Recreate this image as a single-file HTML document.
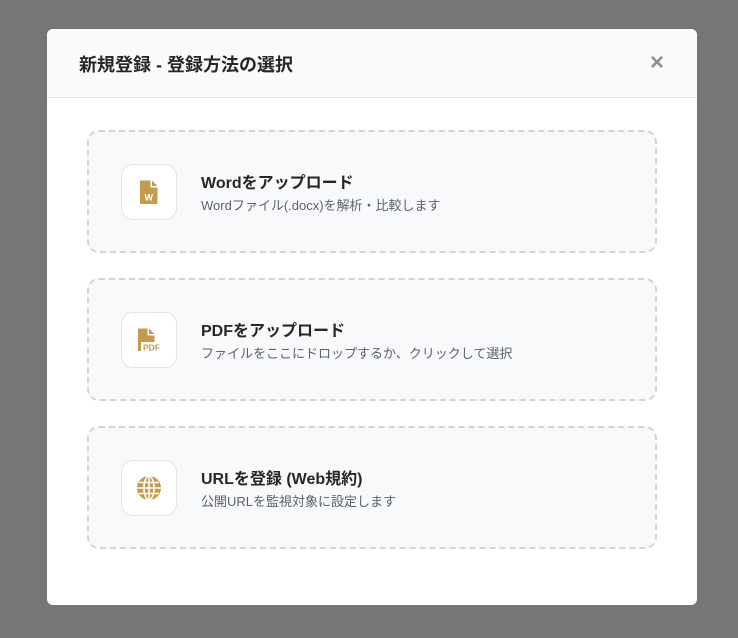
<!DOCTYPE html>
<html><head><meta charset="utf-8"><style>
*{box-sizing:border-box;margin:0;padding:0}
body{width:738px;height:638px;background:#767676;font-family:"Liberation Sans","Noto Sans CJK JP",sans-serif;position:relative;overflow:hidden}
.modal{position:absolute;left:47px;top:29px;width:650px;height:576px;background:#fff;border-radius:6px;overflow:hidden}
.hd{height:69px;background:#fafafa;border-bottom:1px solid #e5e7eb;position:relative}
.hd h1{position:absolute;left:32px;top:22px;font-size:18px;font-weight:bold;color:#27272a}
.x{position:absolute;left:603px;top:20px;font-size:24px;color:#8b8f97;font-weight:bold}
.card{position:absolute;left:40px;width:570px;height:123px;border:2px dashed #d1d5db;border-radius:12px;background:#f8f9fb}
.ic{position:absolute;left:32px;top:32px;width:56px;height:56px;background:#fff;border:1px solid #e3e5e9;border-radius:12px;display:flex;align-items:center;justify-content:center}
.t{position:absolute;left:112px;top:37px;font-size:16px;font-weight:bold;color:#27272a}
.s{position:absolute;left:112px;top:63px;font-size:13px;color:#5b606a}
</style></head><body>
<div class="modal">
<div class="hd"><h1>新規登録 - 登録方法の選択</h1><div class="x">×</div></div>
<div class="card" style="top:101px"><div class="ic"><svg width="20" height="26" viewBox="0 0 20 26"><path d="M2 1.5h9.5v7h7V24a1 1 0 0 1-1 1H2a1 1 0 0 1-1-1V2.5a1 1 0 0 1 1-1z" fill="#c49a4b"/><path d="M13 1.5l5.5 5.5H13z" fill="#c49a4b"/><text x="9.8" y="21.5" font-size="9" font-weight="bold" fill="#fff" text-anchor="middle" font-family="Liberation Sans">W</text></svg></div><div class="t">Wordをアップロード</div><div class="s">Wordファイル(.docx)を解析・比較します</div></div>
<div class="card" style="top:249px"><div class="ic"><svg width="26" height="26" viewBox="0 0 26 26"><path d="M2 1.5h9.5v7h7V24H2z" fill="#c49a4b"/><path d="M13 1.5l5.5 5.5H13z" fill="#c49a4b"/><rect x="5" y="15" width="21" height="10" fill="#fff"/><text x="15.5" y="23.5" font-size="8.5" font-weight="bold" fill="#c49a4b" text-anchor="middle" font-family="Liberation Sans">PDF</text></svg></div><div class="t">PDFをアップロード</div><div class="s">ファイルをここにドロップするか、クリックして選択</div></div>
<div class="card" style="top:397px"><div class="ic"><svg width="26" height="26" viewBox="0 0 26 26"><circle cx="13" cy="13" r="12" fill="#c49a4b"/><g stroke="#fff" stroke-width="1.6" fill="none"><ellipse cx="13" cy="13" rx="5" ry="12"/><line x1="13" y1="1" x2="13" y2="25"/><line x1="1" y1="13" x2="25" y2="13"/><line x1="3" y1="7.5" x2="23" y2="7.5"/><line x1="3" y1="18.5" x2="23" y2="18.5"/></g></svg></div><div class="t">URLを登録 (Web規約)</div><div class="s">公開URLを監視対象に設定します</div></div>
</div>
</body></html>
